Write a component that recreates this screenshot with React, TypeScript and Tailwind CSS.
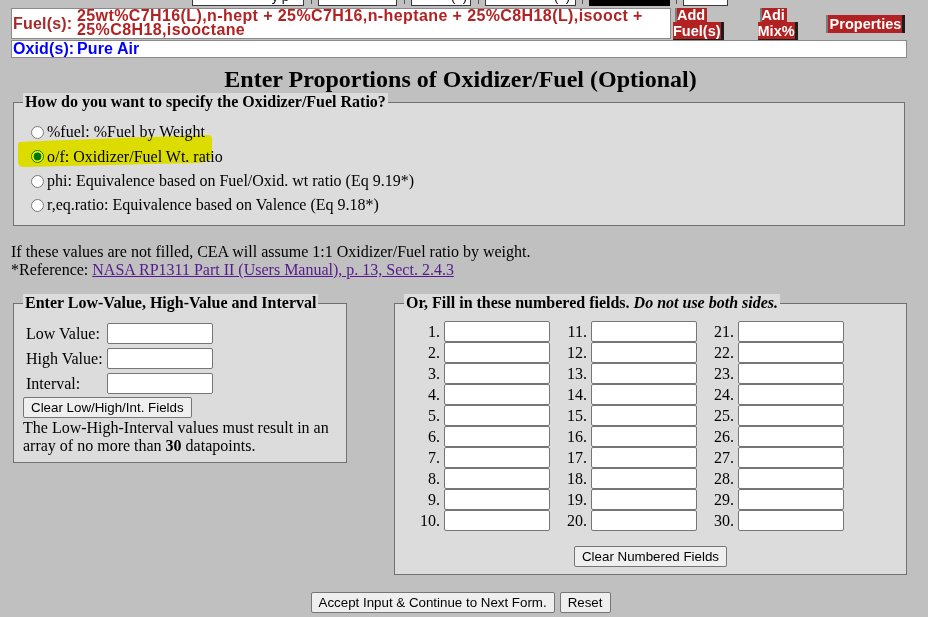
import React from "react";

const serif = "font-['Liberation_Serif','Times_New_Roman',serif]";
const sans = "font-['Liberation_Sans',Arial,sans-serif]";

function Btn({ children, className = "" }: { children: React.ReactNode; className?: string }) {
  return (
    <button
      type="button"
      className={`${sans} h-[21px] rounded-[2px] border border-[#767676] bg-[#efefef] px-[7px] text-[13.33px] leading-[15px] text-black ${className}`}
    >
      {children}
    </button>
  );
}

function TextBox({ className = "" }: { className?: string }) {
  return <input type="text" className={`h-[21px] w-[106px] rounded-[2px] border border-[#767676] bg-white ${className}`} />;
}

function RedBtn({ first, second }: { first: string; second: string }) {
  return (
    <div className={`${sans} flex flex-col items-start text-[14.5px] font-bold text-white`}>
      <span className="ml-[2px] h-[14px] border-l-2 border-[#7d7d7d] bg-[#b22222] pr-[2px] leading-[15px]">{first}</span>
      <span className="h-[18px] border-r-[3px] border-b border-[#1c1c1c] bg-[#b22222] leading-[18px]">{second}</span>
    </div>
  );
}

export default function App() {
  const radios = [
    { label: "%fuel: %Fuel by Weight", h: "h-[24px]" },
    { label: "o/f: Oxidizer/Fuel Wt. ratio", h: "h-[25px]", checked: true },
    { label: "phi: Equivalence based on Fuel/Oxid. wt ratio (Eq 9.19*)", h: "h-[24px]" },
    { label: "r,eq.ratio: Equivalence based on Valence (Eq 9.18*)", h: "h-[24px]" },
  ];
  const nums = Array.from({ length: 30 }, (_, i) => i + 1);

  return (
    <div className={`relative min-h-screen bg-[#c0c0c0] text-black ${serif}`}>
      <div className="ml-[11px] w-[896px]">
        {/* bottom edge of the row above, scrolled off */}
        <div className={`${sans} flex h-[6px] items-start text-[13px]`}>
          <div className="ml-[181px] flex h-[6px] w-[112px] shrink-0 justify-end overflow-hidden border-x border-b border-[#3a3a3a] bg-white pr-[14px]">
            <span className="-mt-[11px] leading-[15px]">y p</span>
          </div>
          <div className="ml-[7px] h-[4px] w-px shrink-0 bg-[#555]" />
          <div className="ml-[6px] h-[6px] w-[79px] shrink-0 border-x border-b border-[#3a3a3a] bg-white" />
          <div className="ml-[7px] h-[4px] w-px shrink-0 bg-[#555]" />
          <div className="ml-[6px] flex h-[6px] w-[60px] shrink-0 justify-end overflow-hidden border-x border-b border-[#3a3a3a] bg-white pr-[3px]">
            <span className="-mt-[11px] leading-[15px]">(&nbsp;&nbsp;)</span>
          </div>
          <div className="ml-[7px] h-[4px] w-px shrink-0 bg-[#555]" />
          <div className="ml-[6px] flex h-[6px] w-[91px] shrink-0 justify-end overflow-hidden border-x border-b border-[#3a3a3a] bg-white pr-[5px]">
            <span className="-mt-[11px] leading-[15px]">(&nbsp;&nbsp;)</span>
          </div>
          <div className="ml-[6px] h-[4px] w-px shrink-0 bg-[#555]" />
          <div className="ml-[6px] h-[6px] w-[81px] shrink-0 bg-black" />
          <div className="ml-[6px] h-[4px] w-px shrink-0 bg-[#555]" />
          <div className="ml-[6px] h-[6px] w-[45px] shrink-0 border-x border-b border-[#3a3a3a] bg-white" />
        </div>

        {/* fuel row */}
        <div className={`${sans} mt-[2px] flex items-start`}>
          <div className="flex h-[31px] w-[660px] shrink-0 items-center border border-[#8a8a8a] bg-white">
            <div className="w-[65px] shrink-0 pl-[1px] text-[16px] font-bold leading-[14px] tracking-[0.2px] text-[#a52a2a]">Fuel(s):</div>
            <div className="self-start text-[16px] font-bold leading-[14px] tracking-[0.4px] text-[#b22222]">
              25wt%C7H16(L),n-hept + 25%C7H16,n-heptane + 25%C8H18(L),isooct +
              <br />
              25%C8H18,isooctane
            </div>
          </div>
          <div className="ml-[2px] shrink-0">
            <RedBtn first="Add" second="Fuel(s)" />
          </div>
          <div className="ml-[34px] shrink-0">
            <RedBtn first="Adi" second="Mix%" />
          </div>
          <div className="ml-[28px] mt-[7px] h-[18px] shrink-0 border-l-2 border-r-[3px] border-l-[#7d7d7d] border-r-[#1c1c1c] bg-[#b22222] pl-[2px] pr-[1px] text-[14.5px] font-bold leading-[18px] text-white">
            Properties
          </div>
        </div>

        {/* oxid row */}
        <div className={`${sans} flex h-[18px] items-center border border-[#8a8a8a] bg-white text-[16px] font-bold leading-[16px] tracking-[0.1px] text-[#0000ff]`}>
          <div className="w-[65px] pl-[1px]">Oxid(s):</div>
          <div>Pure Air</div>
        </div>

        <h2 className="mt-[7px] pl-[3px] text-center text-[24px] font-bold leading-[28px]">
          Enter Proportions of Oxidizer/Fuel (Optional)
        </h2>

        <fieldset className="ml-[2px] w-[892px] border border-[#707070] bg-[#dcdcdc] pb-[8px] pl-[9px]">
          <legend className="bg-[#dcdcdc] px-[2px] text-[16px] font-bold leading-[18px]">
            How do you want to specify the Oxidizer/Fuel Ratio?
          </legend>
          <div className="pt-[9px]">
            {radios.map((r) => (
              <label key={r.label} className={`flex items-center ${r.h} text-[16px] leading-[18px]`}>
                <input
                  type="radio"
                  name="ratio"
                  defaultChecked={r.checked}
                  className="m-0 ml-[8px] mr-[3px] h-[13px] w-[13px]"
                />
                <span>{r.label}</span>
              </label>
            ))}
          </div>
        </fieldset>

        <p className="mt-[17px] text-[16px] leading-[18px]">
          If these values are not filled, CEA will assume 1:1 Oxidizer/Fuel ratio by weight.
          <br />
          *Reference:{" "}
          <a href="#" className="text-[#551a8b] underline">
            NASA RP1311 Part II (Users Manual), p. 13, Sect. 2.4.3
          </a>
        </p>

        <div className="mt-[15px] flex items-start">
          <fieldset className="ml-[2px] w-[334px] border border-[#707070] bg-[#dcdcdc] pb-[7px] pl-[9px]">
            <legend className="bg-[#dcdcdc] px-[2px] text-[16px] font-bold leading-[18px]">
              Enter Low-Value, High-Value and Interval
            </legend>
            <div className="flex flex-col gap-[4px] pt-[11px] text-[16px] leading-[18px]">
              {["Low Value:", "High Value:", "Interval:"].map((l) => (
                <div key={l} className="flex items-center">
                  <span className="w-[84px] pl-[3px]">{l}</span>
                  <TextBox />
                </div>
              ))}
            </div>
            <Btn className="mt-[3px]">Clear Low/High/Int. Fields</Btn>
            <p className="text-[16px] leading-[18px]">
              The Low-High-Interval values must result in an
              <br />
              array of no more than <b>30</b> datapoints.
            </p>
          </fieldset>

          <fieldset className="ml-[47px] w-[513px] border border-[#707070] bg-[#dcdcdc] pb-[7px] pl-[9px]">
            <legend className="bg-[#dcdcdc] px-[2px] text-[16px] font-bold leading-[18px]">
              Or, Fill in these numbered fields. <i>Do not use both sides.</i>
            </legend>
            <div className="ml-[9px] grid grid-flow-col grid-cols-[137px_137px_137px] grid-rows-[repeat(10,21px)] gap-x-[10px] pt-[9px] text-[16px] leading-[18px]">
              {nums.map((n) => (
                <div key={n} className="flex items-center">
                  <span className="mr-[4px] w-[27px] text-right">{n}.</span>
                  <TextBox />
                </div>
              ))}
            </div>
            <div className="mt-[15px] flex justify-center pr-[9px]">
              <Btn>Clear Numbered Fields</Btn>
            </div>
          </fieldset>
        </div>

        <div className="mt-[17px] flex justify-center gap-[5px] pl-[3px]">
          <Btn>Accept Input &amp; Continue to Next Form.</Btn>
          <Btn>Reset</Btn>
        </div>
      </div>

      {/* yellow highlighter mark drawn over the o/f option */}
      <svg
        className="pointer-events-none absolute left-[16px] top-[133px] mix-blend-multiply"
        width="200"
        height="36"
        viewBox="16 133 200 36"
      >
        <path
          d="M20 142 C60 140 150 137 208 135 Q212 135 212 139 L212 156 Q212 162 196 163 L24 167 Q18 167 18 162 L18 146 Q18 142 20 142 Z"
          fill="#ffff00"
        />
      </svg>
    </div>
  );
}
